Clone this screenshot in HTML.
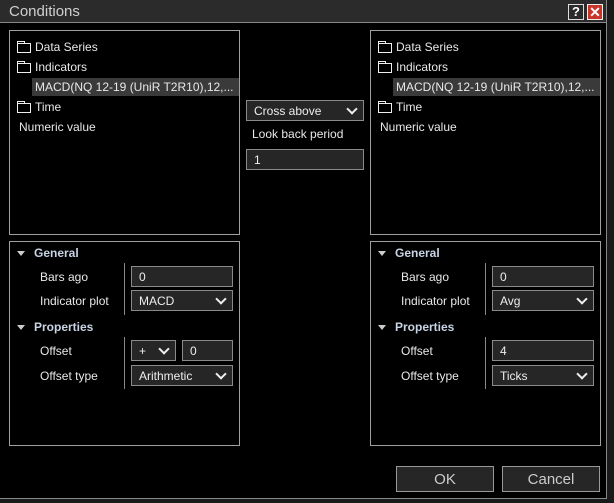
<!DOCTYPE html>
<html><head><style>
*{box-sizing:border-box;margin:0;padding:0}
body{width:614px;height:503px;background:#1a1a1a;font-family:"Liberation Sans",Arial,sans-serif;font-size:12px;color:#e8e8e8;position:relative;overflow:hidden}
.dlg{position:absolute;left:0;top:0;width:607px;height:499px;background:#000;border:1px solid #888;border-top:none;border-left:none}
.title{position:absolute;left:0;top:0;width:606px;height:23px;background:#2b2b2b;border-bottom:1px solid #888;font-size:15px;color:#d0d0d0;padding:3px 9px}
.box{position:absolute;border:1px solid #a0a0a0;background:#000}
.abs{position:absolute;white-space:nowrap}
.inp{position:absolute;border:1px solid #8a8a8a;background:#262626;padding:3px 7px 0;font-size:12px;height:21px;color:#eee}
.sel:after{content:"";position:absolute;right:7px;top:4px;width:6px;height:6px;border-right:2px solid #eee;border-bottom:2px solid #eee;transform:rotate(45deg)}
.btn{position:absolute;border:1px solid #999;background:#262626;color:#ccc;font-size:15px;text-align:center;padding-top:4px;height:26px}
.hdr{position:absolute;color:#c8d4e4;font-weight:bold;font-size:12px}
.tri{position:absolute;width:0;height:0;border-left:4px solid transparent;border-right:4px solid transparent;border-top:5px solid #ccc}
.fold{position:absolute;width:14px;height:10px;border:1px solid #eee}
.fold:before{content:"";position:absolute;left:-1px;top:-3px;width:6px;height:2px;border:1px solid #eee;border-bottom:none}
.div{position:absolute;width:1px;background:#888}
</style></head><body>
<div class="dlg"></div>
<div class="title">Conditions</div>
<div class="abs" style="left:568px;top:4px;width:16px;height:16px;border:1px solid #ddd;color:#fff;font-weight:bold;font-size:13px;text-align:center;line-height:14px">?</div>
<div class="abs" style="left:587px;top:4px;width:16px;height:16px;background:#c8362a;border:1px solid #eee;color:#fff;font-weight:bold;font-size:14px;text-align:center;line-height:14px">✕</div>

<div class="box" style="left:9px;top:30px;width:231px;height:205px"></div>
<div class="fold" style="left:17px;top:43px"></div><div class="abs" style="left:35px;top:40px">Data Series</div>
<div class="fold" style="left:17px;top:63px"></div><div class="abs" style="left:35px;top:60px">Indicators</div>
<div class="abs" style="left:32px;top:78px;width:207px;height:18px;background:#3a3a3a;padding:2px 3px">MACD(NQ 12-19 (UniR T2R10),12,...</div>
<div class="fold" style="left:17px;top:103px"></div><div class="abs" style="left:35px;top:100px">Time</div>
<div class="abs" style="left:19px;top:120px">Numeric value</div>

<div class="box" style="left:370px;top:30px;width:231px;height:205px"></div>
<div class="fold" style="left:378px;top:43px"></div><div class="abs" style="left:396px;top:40px">Data Series</div>
<div class="fold" style="left:378px;top:63px"></div><div class="abs" style="left:396px;top:60px">Indicators</div>
<div class="abs" style="left:393px;top:78px;width:207px;height:18px;background:#3a3a3a;padding:2px 3px">MACD(NQ 12-19 (UniR T2R10),12,...</div>
<div class="fold" style="left:378px;top:103px"></div><div class="abs" style="left:396px;top:100px">Time</div>
<div class="abs" style="left:380px;top:120px">Numeric value</div>

<div class="inp sel" style="left:246px;top:100px;width:118px">Cross above</div>
<div class="abs" style="left:252px;top:127px">Look back period</div>
<div class="inp" style="left:246px;top:149px;width:118px">1</div>

<div class="box" style="left:9px;top:241px;width:231px;height:205px"></div>
<div class="tri" style="left:17px;top:251px"></div><div class="hdr" style="left:34px;top:246px">General</div>
<div class="abs" style="left:40px;top:270px">Bars ago</div>
<div class="abs" style="left:40px;top:294px">Indicator plot</div>
<div class="div" style="left:124px;top:263px;height:52px"></div>
<div class="inp" style="left:131px;top:266px;width:102px">0</div>
<div class="inp sel" style="left:131px;top:290px;width:102px">MACD</div>
<div class="tri" style="left:17px;top:325px"></div><div class="hdr" style="left:34px;top:320px">Properties</div>
<div class="abs" style="left:40px;top:344px">Offset</div>
<div class="abs" style="left:40px;top:369px">Offset type</div>
<div class="div" style="left:124px;top:337px;height:52px"></div>
<div class="inp sel" style="left:131px;top:340px;width:45px">+</div>
<div class="inp" style="left:182px;top:340px;width:51px">0</div>
<div class="inp sel" style="left:131px;top:365px;width:102px">Arithmetic</div>

<div class="box" style="left:370px;top:241px;width:231px;height:205px"></div>
<div class="tri" style="left:378px;top:251px"></div><div class="hdr" style="left:395px;top:246px">General</div>
<div class="abs" style="left:401px;top:270px">Bars ago</div>
<div class="abs" style="left:401px;top:294px">Indicator plot</div>
<div class="div" style="left:485px;top:263px;height:52px"></div>
<div class="inp" style="left:492px;top:266px;width:102px">0</div>
<div class="inp sel" style="left:492px;top:290px;width:102px">Avg</div>
<div class="tri" style="left:378px;top:325px"></div><div class="hdr" style="left:395px;top:320px">Properties</div>
<div class="abs" style="left:401px;top:344px">Offset</div>
<div class="abs" style="left:401px;top:369px">Offset type</div>
<div class="div" style="left:485px;top:337px;height:52px"></div>
<div class="inp" style="left:492px;top:340px;width:102px">4</div>
<div class="inp sel" style="left:492px;top:365px;width:102px">Ticks</div>

<div class="btn" style="left:396px;top:466px;width:98px">OK</div>
<div class="btn" style="left:502px;top:466px;width:98px">Cancel</div>
</body></html>
